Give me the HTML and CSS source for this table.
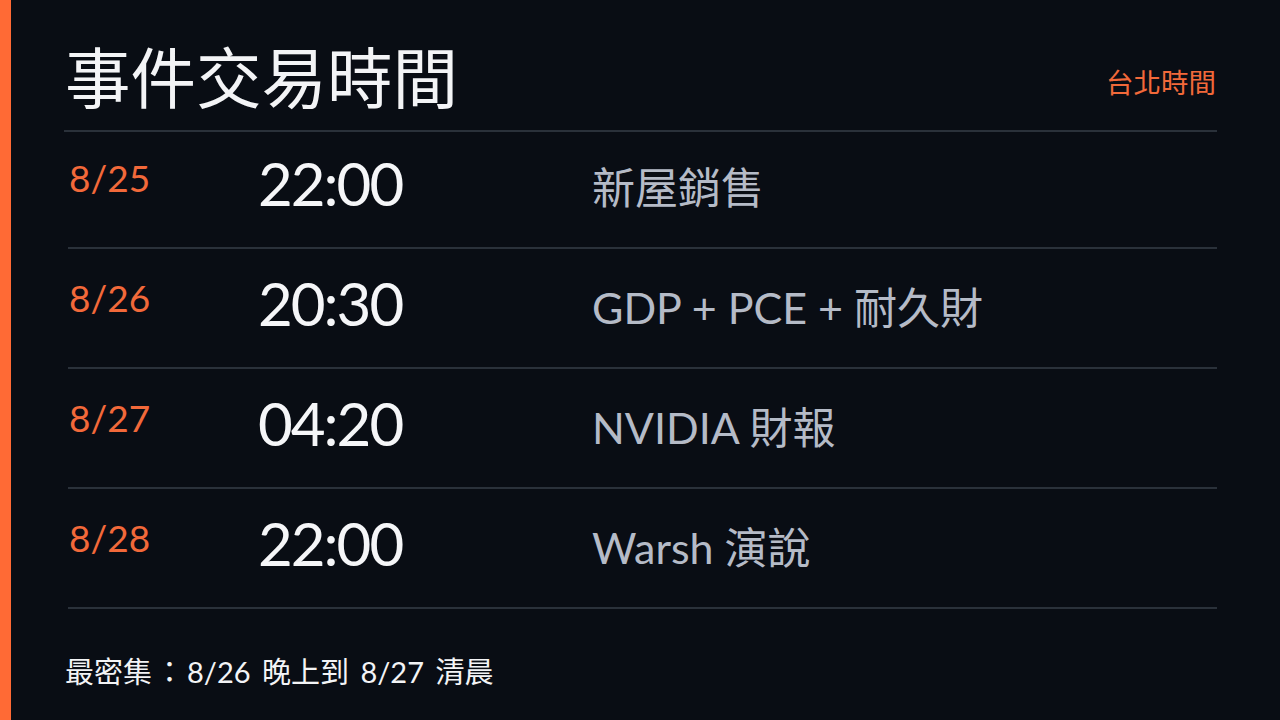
FILE: index.html
```html
<!DOCTYPE html>
<html lang="zh-Hant">
<head>
<meta charset="utf-8">
<title>事件交易時間</title>
<link rel="stylesheet" href="styles.css">
</head>
<body>
<main class="slide">
  <header class="head">
    <h1 class="title">事件交易時間</h1>
    <span class="tz">台北時間</span>
  </header>
  <section class="table">
    <div class="row">
      <span class="date">8/25</span>
      <span class="time">22:00</span>
      <span class="event">新屋銷售</span>
    </div>
    <div class="row">
      <span class="date">8/26</span>
      <span class="time">20:30</span>
      <span class="event">GDP + PCE + 耐久財</span>
    </div>
    <div class="row">
      <span class="date">8/27</span>
      <span class="time">04:20</span>
      <span class="event">NVIDIA 財報</span>
    </div>
    <div class="row">
      <span class="date">8/28</span>
      <span class="time">22:00</span>
      <span class="event">Warsh 演說</span>
    </div>
  </section>
  <p class="note">最密集<span class="colon">：</span>8/26 晚上到 8/27 清晨</p>
</main>
</body>
</html>
```
FILE: styles.css
```css
html, body {
  margin: 0;
  padding: 0;
  background: #090d14;
}
body {
  font-family: "Lato", "Noto Sans CJK TC", sans-serif;
  color: #f3f4f6;
}
.slide {
  width: 1280px;
  height: 720px;
  box-sizing: border-box;
  border-left: 11px solid #ff6a35;
  padding: 0 63px 0 53px;
  display: flex;
  flex-direction: column;
}
.head {
  height: 132px;
  display: flex;
  align-items: flex-start;
  justify-content: space-between;
  border-bottom: 2px solid #2a313a;
  padding-left: 1px;
  box-sizing: border-box;
}
.title {
  margin: 42px 0 0;
  font-family: "Noto Sans CJK TC", sans-serif;
  font-weight: 400;
  font-size: 65.5px;
  line-height: 1;
  color: #f3f4f6;
}
.tz {
  font-family: "Noto Sans CJK TC", sans-serif;
  font-size: 27.5px;
  line-height: 1;
  color: #f2693a;
  margin-top: 68px;
  margin-right: 1px;
}
.table {
  margin-left: 4px;
}
.row {
  height: 120px;
  box-sizing: border-box;
  border-bottom: 2px solid #2a313a;
  display: grid;
  grid-template-columns: 190px 334px 1fr;
  align-items: start;
}
.row:first-child {
  height: 117px;
}
.date {
  font-size: 37px;
  line-height: 1;
  color: #f2693a;
  padding-top: 30px;
  padding-left: 1px;
}
.time {
  font-size: 60px;
  line-height: 1;
  color: #f5f6f8;
  letter-spacing: -2px;
  padding-top: 24px;
}
.event {
  font-size: 43px;
  line-height: 1;
  color: #b5bbc7;
  padding-top: 37px;
}
.row:first-child .date,
.row:first-child .time,
.row:first-child .event {
  margin-top: -3px;
}
.note {
  margin: 48px 0 0 1px;
  font-size: 29px;
  line-height: 1;
  color: #f3f4f6;
  word-spacing: 4px;
}
.colon {
  margin: 0 3px;
}
```
